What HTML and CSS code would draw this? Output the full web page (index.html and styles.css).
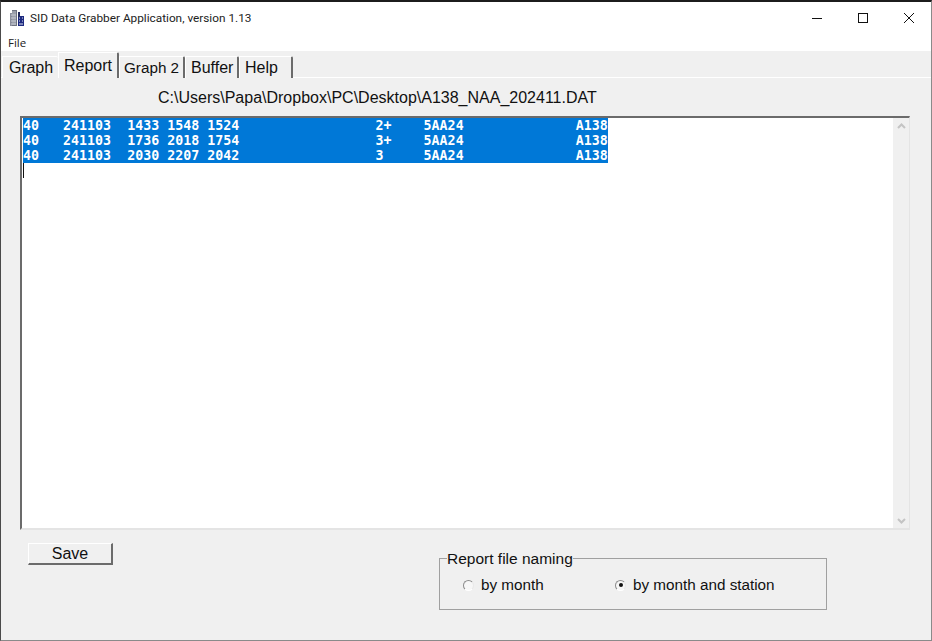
FILE: index.html
```html
<!DOCTYPE html>
<html lang="en">
<head>
<meta charset="utf-8">
<title>SID Data Grabber Application, version 1.13</title>
<link rel="stylesheet" href="styles.css">
</head>
<body>
<div class="window">
  <header class="titlebar">
    <svg class="app-icon" width="16" height="16" viewBox="0 0 16 16">
      <rect x="1" y="3" width="7" height="13" fill="#8b8f9c"/>
      <rect x="3" y="0" width="5" height="16" fill="#6f7482"/>
      <path d="M2 5h5M2 8h5M2 11h5M2 14h5M4 1v14M6 1v14" stroke="#c9ccd4" stroke-width="1"/>
      <rect x="9" y="6" width="6" height="10" fill="#1d2a80"/>
      <path d="M10 8h1M13 8h1M10 11h1M13 11h1M10 14h4" stroke="#dfe3f2" stroke-width="1"/>
      <rect x="9" y="2" width="2" height="5" fill="#20285c"/>
    </svg>
    <span class="title-text">SID Data Grabber Application, version 1.13</span>
    <div class="win-controls">
      <svg width="10" height="10" viewBox="0 0 10 10"><path d="M0 5.5h10" stroke="#111" stroke-width="1"/></svg>
      <svg width="10" height="10" viewBox="0 0 10 10"><rect x="0.5" y="0.5" width="9" height="9" fill="none" stroke="#111"/></svg>
      <svg width="10" height="10" viewBox="0 0 10 10"><path d="M0 0L10 10M10 0L0 10" stroke="#111" stroke-width="1"/></svg>
    </div>
  </header>
  <nav class="menubar"><span>File</span></nav>
  <div class="tabs">
    <div class="tab tab-graph">Graph</div>
    <div class="tab tab-active">Report</div>
    <div class="tab tab-graph2">Graph 2</div>
    <div class="tab tab-buffer">Buffer</div>
    <div class="tab tab-help">Help</div>
  </div>
  <main class="panel">
    <div class="path">C:\Users\Papa\Dropbox\PC\Desktop\A138_NAA_202411.DAT</div>
    <div class="listbox">
      <div class="list-content">
        <div class="row">40   241103  1433 1548 1524                 2+    5AA24              A138</div>
        <div class="row">40   241103  1736 2018 1754                 3+    5AA24              A138</div>
        <div class="row">40   241103  2030 2207 2042                 3     5AA24              A138</div>
        <div class="caret"></div>
      </div>
      <div class="scrollbar">
        <svg width="9" height="6" viewBox="0 0 9 6"><path d="M1 5L4.5 1.5L8 5" fill="none" stroke="#c4c4c4" stroke-width="2"/></svg>
        <svg width="9" height="6" viewBox="0 0 9 6"><path d="M1 1L4.5 4.5L8 1" fill="none" stroke="#c4c4c4" stroke-width="2"/></svg>
      </div>
    </div>
    <div class="bottom">
      <button class="save" type="button">Save</button>
      <fieldset class="group">
        <legend>Report file naming</legend>
        <div class="option option-month"><span class="radio"></span><span>by month</span></div>
        <div class="option"><span class="radio radio-on"></span><span>by month and station</span></div>
      </fieldset>
    </div>
  </main>
</div>
</body>
</html>
```
FILE: styles.css
```css
* { box-sizing: border-box; }
html, body { margin: 0; padding: 0; }
body { width: 932px; height: 641px; overflow: hidden; background: #f0f0f0; }
.window {
  width: 932px; height: 641px; display: flex; flex-direction: column;
  border-top: 2px solid #1c1c1c; border-left: 1px solid #4a4a4a;
  border-right: 1px solid #8a8a8a; border-bottom: 1px solid #8a8a8a;
  font-family: "Liberation Sans", Arial, sans-serif; color: #111;
}
.titlebar {
  height: 32px; flex: none; background: #fff; display: flex; align-items: center;
  padding-left: 8px;
}
.app-icon { flex: none; margin-right: 5px; }
.title-text { font: 11.8px Roboto, sans-serif; color: #222; }
.win-controls { margin-left: auto; display: flex; align-items: center; gap: 36px; padding-right: 17px; margin-top: -1px; }
.menubar { height: 17px; flex: none; background: #fff; padding: 1px 0 0 7px; font: 11.5px/16px "Open Sans", sans-serif; color: #222; }
.tabs {
  height: 27px; flex: none; display: flex; align-items: flex-end; background: #f0f0f0;
  padding-left: 1px; border-bottom: 1px solid #fff;
}
.tab {
  height: 22px; font-size: 16px; line-height: 21px; padding-left: 5px; white-space: nowrap;
  border-top: 1px solid #fff; border-left: 1px solid #fff; border-right: 2px solid #6b6b6b;
  border-top-right-radius: 2px; background: #f0f0f0; margin-bottom: -1px;
}
.tab-graph { width: 56px; border-right: 0; padding-left: 6px; letter-spacing: -0.1px; }
.tab-active { width: 61px; height: 26px; line-height: 25px; margin-bottom: -1px; position: relative; }
.tab-graph2 { width: 66px; padding-left: 4px; font-size: 15.25px; }
.tab-buffer { width: 54px; }
.tab-help { width: 54px; }
.panel { flex: 1; display: flex; flex-direction: column; padding: 0 21px 0 19px; min-height: 0; }
.path { height: 38px; padding: 10px 0 0 138px; font-size: 16px; line-height: 20px; }
.listbox {
  height: 414px; flex: none; display: flex; background: #fff;
  border-top: 2px solid #6b6b6b; border-left: 2px solid #6b6b6b;
  border-right: 1px solid #e4e4e4; border-bottom: 2px solid #e4e4e4;
}
.list-content { flex: 1; padding-left: 1px; }
.row {
  width: 585px; height: 15px; background: #0078d7; color: #fff; white-space: pre;
  font: bold 13.28px/15px "DejaVu Sans Mono", monospace; letter-spacing: 0.025px;
}
.caret { width: 1px; height: 15px; background: #111; }
.scrollbar {
  width: 16px; flex: none; background: #f0f0f0; display: flex; flex-direction: column;
  justify-content: space-between; align-items: center; padding: 5px 0 4px;
}
.bottom { flex: 1; display: flex; align-items: flex-start; }
.save {
  width: 85px; height: 22px; margin: 13px 0 0 8px; padding: 0; background: #f0f0f0;
  border: 1px solid; border-color: #fff #6b6b6b #6b6b6b #fff; border-width: 1px 2px 2px 1px;
  font: 16px/18px "Liberation Sans", Arial, sans-serif; color: #111;
}
.group {
  width: 388px; height: 62px; margin: 18px 0 0 326px; padding: 0 0 7px 23px;
  border: 1px solid #a0a0a0; display: flex; align-items: center; min-width: 0;
  font-size: 15.25px;
}
.group legend { padding: 2px 0 0; margin-left: -16px; font-size: 15.5px; line-height: 18px; }
.option { display: flex; align-items: center; gap: 7px; line-height: 18px; }
.option-month { width: 152px; }
.radio {
  width: 11px; height: 11px; border-radius: 50%; background: #f7f7f7; flex: none;
  border: 1px solid; border-color: #8c8c8c #e8e8e8 #fff #8c8c8c;
  display: flex; align-items: center; justify-content: center;
}
.radio-on::after { content: ""; width: 4px; height: 4px; border-radius: 50%; background: #111; }
```
